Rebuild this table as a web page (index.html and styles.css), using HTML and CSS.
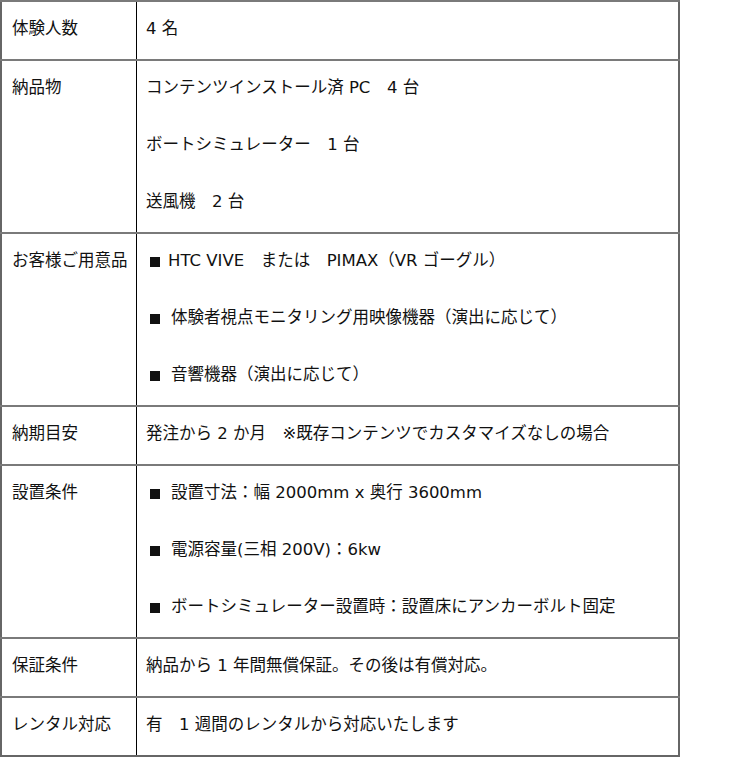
FILE: index.html
```html
<!DOCTYPE html>
<html lang="ja">
<head>
<meta charset="utf-8">
<link rel="stylesheet" href="styles.css">
</head>
<body>
<table class="spec">
  <tr>
    <th><div class="line">体験人数</div></th>
    <td><div class="line">4 名</div></td>
  </tr>
  <tr>
    <th><div class="line">納品物</div></th>
    <td>
      <div class="line">コンテンツインストール済 PC　4 台</div>
      <div class="line">ボートシミュレーター　1 台</div>
      <div class="line">送風機　2 台</div>
    </td>
  </tr>
  <tr>
    <th><div class="line">お客様ご用意品</div></th>
    <td>
      <div class="line"><span class="mark mark-tight"></span>HTC VIVE　または　PIMAX（VR ゴーグル）</div>
      <div class="line"><span class="mark"></span>体験者視点モニタリング用映像機器（演出に応じて）</div>
      <div class="line"><span class="mark"></span>音響機器（演出に応じて）</div>
    </td>
  </tr>
  <tr>
    <th><div class="line">納期目安</div></th>
    <td><div class="line">発注から 2 か月　※既存コンテンツでカスタマイズなしの場合</div></td>
  </tr>
  <tr>
    <th><div class="line">設置条件</div></th>
    <td>
      <div class="line"><span class="mark"></span>設置寸法：幅 2000mm x 奥行 3600mm</div>
      <div class="line"><span class="mark"></span>電源容量(三相 200V)：6kw</div>
      <div class="line"><span class="mark"></span>ボートシミュレーター設置時：設置床にアンカーボルト固定</div>
    </td>
  </tr>
  <tr>
    <th><div class="line">保証条件</div></th>
    <td><div class="line">納品から 1 年間無償保証。その後は有償対応。</div></td>
  </tr>
  <tr>
    <th><div class="line">レンタル対応</div></th>
    <td><div class="line">有　1 週間のレンタルから対応いたします</div></td>
  </tr>
</table>
</body>
</html>
```

FILE: styles.css
```css
html, body {
  margin: 0;
  padding: 0;
  background: #ffffff;
}

body {
  font-family: "DejaVu Sans", "Noto Sans CJK JP", sans-serif;
  font-size: 16.5px;
  color: #111111;
}

.spec {
  width: 680px;
  border-collapse: collapse;
  border: 2px solid #666666;
}

.spec tr {
  border-top: 2px solid #7a7a7a;
}

.spec th,
.spec td {
  padding: 0 9px;
  vertical-align: top;
  text-align: left;
  font-weight: normal;
}

.spec th {
  width: 116px;
  border-right: 1px solid #000000;
  padding-left: 10px;
  padding-right: 8px;
}

.line {
  line-height: 54px;
  padding-bottom: 3px;
  white-space: nowrap;
}

.mark {
  display: inline-block;
  width: 10px;
  height: 10px;
  background: #111111;
  margin: 0 11px 0 4px;
  vertical-align: -1px;
}

.mark-tight {
  margin-right: 8px;
}
```
